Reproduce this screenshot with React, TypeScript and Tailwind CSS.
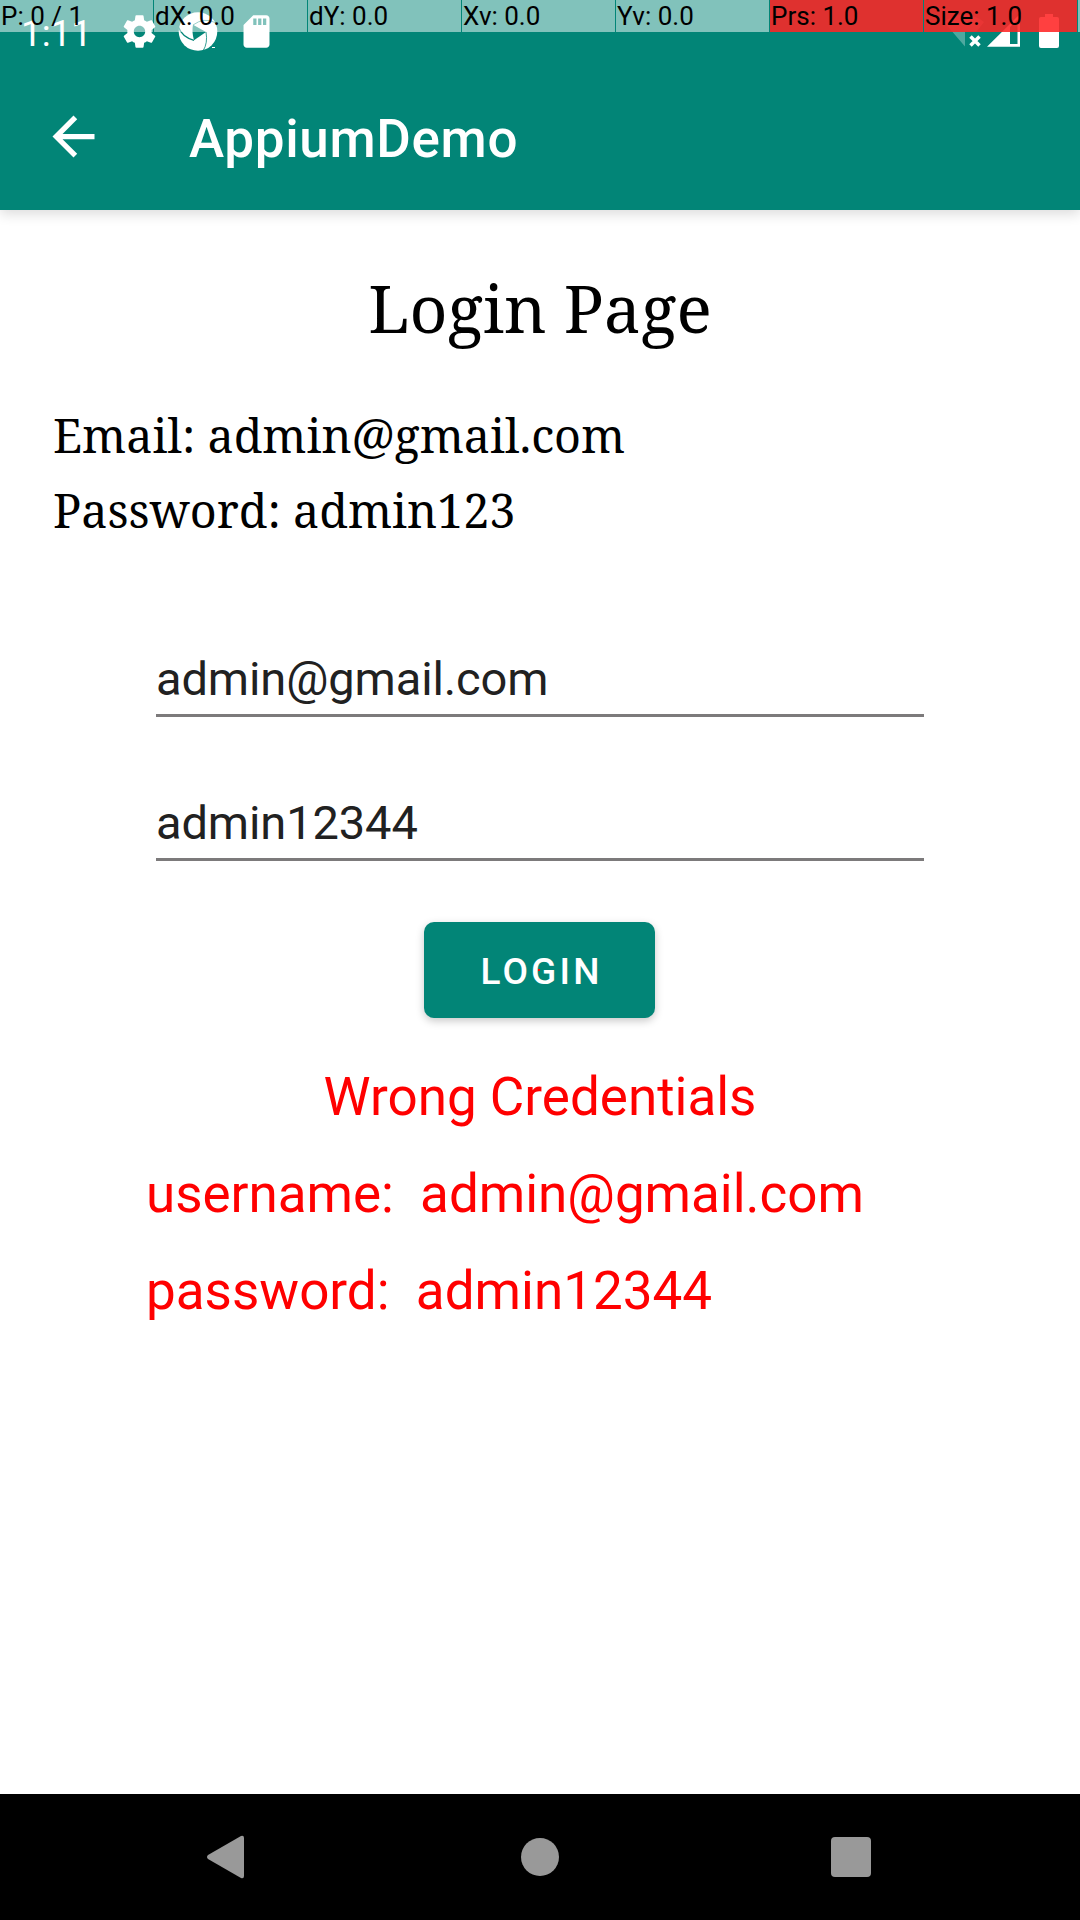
import React from "react";

const metrics = ["P: 0 / 1", "dX: 0.0", "dY: 0.0", "Xv: 0.0", "Yv: 0.0", "Prs: 1.0", "Size: 1.0"];

function PointerBar() {
  return (
    <div className="absolute left-0 top-0 flex h-8 w-[1080px] gap-px overflow-hidden">
      {metrics.map((m, i) => (
        <div key={m} className="h-8 w-[153px] shrink-0 bg-white/50">
          <div
            className={
              i > 4
                ? "h-8 whitespace-pre bg-[rgba(255,0,0,0.75)] pl-px text-[26px] leading-8 text-black"
                : "h-8 whitespace-pre pl-px text-[26px] leading-8 text-black"
            }
          >
            {m}
          </div>
        </div>
      ))}
      <div className="h-8 w-[3px] shrink-0 bg-white/50" />
    </div>
  );
}

function StatusBar() {
  return (
    <div className="flex h-[63px] items-start text-white">
      <span className="ml-[21px] mt-[12px] w-[99px] text-[36.75px] leading-[43px]">1:11</span>
      <svg className="mt-[12px] h-[39px] w-[39px]" viewBox="0 0 24 24" fill="currentColor">
        <path d="M19.43 12.98c.04-.32.07-.64.07-.98s-.03-.66-.07-.98l2.11-1.65c.19-.15.24-.42.12-.64l-2-3.46c-.12-.22-.39-.3-.61-.22l-2.49 1c-.52-.4-1.08-.73-1.69-.98l-.38-2.65C14.46 2.18 14.25 2 14 2h-4c-.25 0-.46.18-.49.42l-.38 2.65c-.61.25-1.17.59-1.69.98l-2.49-1c-.23-.09-.49 0-.61.22l-2 3.46c-.13.22-.07.49.12.64l2.11 1.65c-.04.32-.07.65-.07.98s.03.66.07.98l-2.11 1.65c-.19.15-.24.42-.12.64l2 3.46c.12.22.39.3.61.22l2.49-1c.52.4 1.08.73 1.69.98l.38 2.65c.03.24.24.42.49.42h4c.25 0 .46-.18.49-.42l.38-2.65c.61-.25 1.17-.59 1.69-.98l2.49 1c.23.09.49 0 .61-.22l2-3.46c.12-.22.07-.49-.12-.64l-2.11-1.65zM12 15.5c-1.93 0-3.5-1.57-3.5-3.5s1.57-3.5 3.5-3.5 3.5 1.57 3.5 3.5-1.57 3.5-3.5 3.5z" />
      </svg>
      <svg className="ml-[19px] mt-[11px] h-[41px] w-[40px]" viewBox="178 11 40 41">
        <circle cx="198" cy="31.5" r="19.3" fill="currentColor" />
        <path fill="#028577" d="M193 24.8L206 32L194 40.3Q191.5 32 193 24.8Z" />
        <g fill="none" stroke="#028577" strokeWidth="0.8">
          <path d="M193 25Q204 17 215 22.5" />
          <path d="M206 32Q208 43 203 51" />
          <path d="M194 40.3Q182 37 178.500 27" strokeWidth="1.2" />
        </g>
        <path d="M212 47.5H215" stroke="currentColor" strokeWidth="1" />
      </svg>
      <svg className="ml-[19px] mt-[12px] h-[39px] w-[39px]" viewBox="0 0 24 24" fill="currentColor">
        <path d="M18 2h-8L4.02 8 4 20c0 1.1.9 2 2 2h12c1.1 0 2-.9 2-2V4c0-1.1-.9-2-2-2zm-6 6h-2V4h2v4zm3 0h-2V4h2v4zm3 0h-2V4h2v4z" />
      </svg>
      <svg className="ml-[664px] mt-[10px] h-[40px] w-[132px] shrink-0" viewBox="940 10 132 40" fill="currentColor">
        <path fillOpacity=".3" d="M944 22Q964 7 984 22L976.5 31.5H965V46.5Z" />
        <path d="M970.5 36.5L979.5 45.5M979.5 36.5L970.5 45.5" stroke="currentColor" strokeWidth="3.5" />
        <path fillRule="evenodd" d="M987 46.8L1020 14V46.8ZM1010 27V44H1017.5V19.5Z" />
        <path d="M1045 17V14H1053V17H1057Q1059 17 1059 19V46Q1059 48 1057 48H1041Q1039 48 1039 46V19Q1039 17 1041 17Z" />
      </svg>
    </div>
  );
}

function Field({ value }: { value: string }) {
  return (
    <div className="h-[144px]">
      <div className="h-[66px] pt-[3px] text-[47px] leading-[56px] tracking-[-0.1px] text-[#212121]">{value}</div>
      <div className="h-[3px] bg-[#7c7a7b]" />
    </div>
  );
}

export default function App() {
  return (
    <div className="relative flex h-[1920px] w-[1080px] flex-col overflow-hidden bg-white font-['Roboto',sans-serif]">
      <header className="relative h-[210px] shrink-0 bg-[#028577] shadow-[0_4px_12px_rgba(0,0,0,0.14)]">
        <StatusBar />
        <div className="flex h-[147px] items-center text-white">
          <svg className="ml-[42px] h-[63px] w-[63px]" viewBox="0 0 24 24" fill="currentColor">
            <path d="M20 11H7.83l5.59-5.59L12 4l-8 8 8 8 1.41-1.41L7.83 13H20v-2z" />
          </svg>
          <h1 className="ml-[84px] pt-[4px] text-[53px] font-medium leading-[62px] tracking-[0.65px]">AppiumDemo</h1>
        </div>
        <PointerBar />
      </header>

      <main className="flex h-[1584px] shrink-0 flex-col font-normal">
        <h2 className="mt-[57px] h-[93px] whitespace-nowrap text-center font-['Noto_Serif','DejaVu_Serif',serif] text-[66px] leading-[80px] text-black">
          Login Page
        </h2>
        <div className="mt-[38px] pl-[53px] font-['Noto_Serif','DejaVu_Serif',serif] text-[46.7px] leading-[75px] text-black">
          <div className="whitespace-nowrap">Email: admin@gmail.com</div>
          <div className="whitespace-nowrap">Password: admin123</div>
        </div>
        <div className="ml-[156px] mt-[100px] w-[768px]">
          <Field value="admin@gmail.com" />
          <Field value="admin12344" />
        </div>
        <button className="relative -mt-[14px] ml-[424px] h-[96px] w-[231px] rounded-[10px] bg-[#028577] pl-[4px] pt-[3px] text-[37px] font-medium tracking-[3.2px] text-white shadow-[0_3px_8px_rgba(0,0,0,0.22)]">
          LOGIN
          <span className="absolute left-[114px] top-[47px] h-[2px] w-[2px] bg-[#ff0000]" />
        </button>
        <div className="mt-[31px] text-[53px] leading-[97px] text-[#ff0000]">
          <div className="text-center">Wrong Credentials</div>
          <div className="whitespace-pre pl-[146px] tracking-[-0.03px]">username:  admin@gmail.com</div>
          <div className="whitespace-pre pl-[146px]">password:  admin12344</div>
        </div>
      </main>

      <nav className="flex h-[126px] shrink-0 items-center bg-black text-[#999]">
        <svg className="ml-[207px] h-[44px] w-[37px]" viewBox="0 0 37 44" fill="currentColor">
          <path d="M1 20L34 1Q37 0 37 3V41Q37 44 34 43L1 24Q-1 22 1 20Z" />
        </svg>
        <div className="ml-[277px] h-[38px] w-[38px] rounded-full bg-[#999]" />
        <div className="ml-[272px] h-[40px] w-[40px] rounded-[4px] bg-[#999]" />
      </nav>
    </div>
  );
}
